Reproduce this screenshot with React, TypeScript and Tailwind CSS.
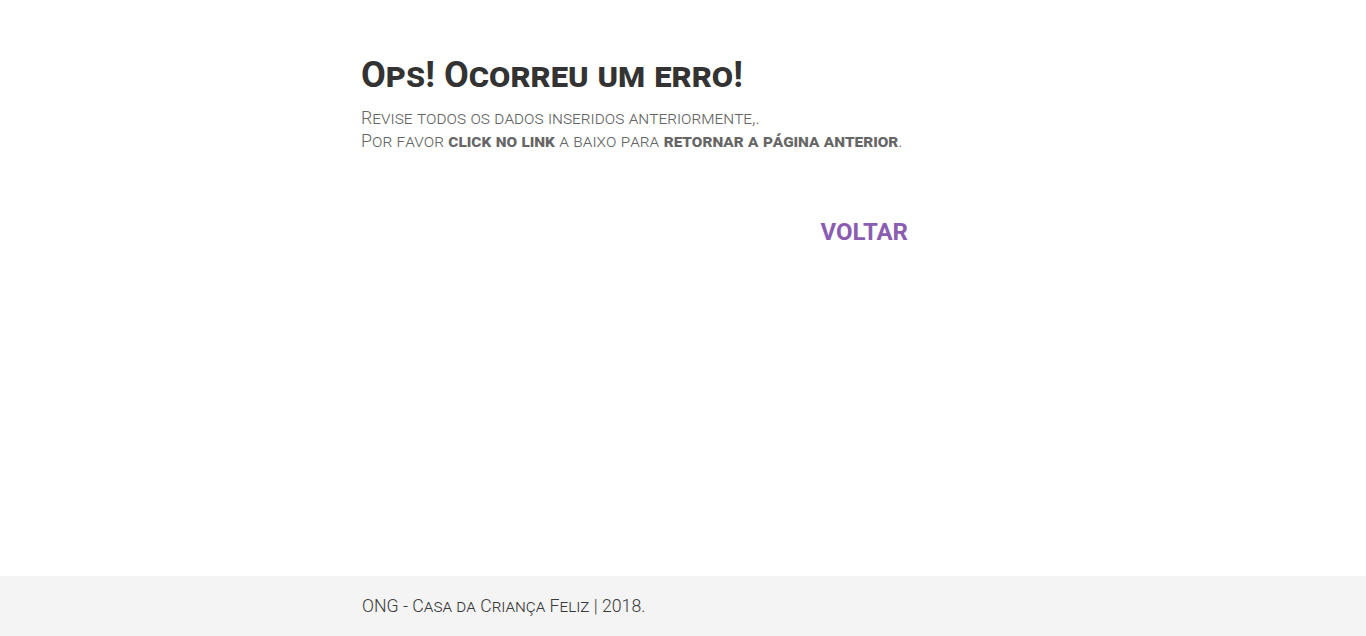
export default function App() {
  return (
    <div className="min-h-[636px] flex flex-col bg-white" style={{ fontFamily: "Roboto, 'Liberation Sans', sans-serif" }}>
      <main className="flex-1 pl-[361px] pt-[52px]">
        <div className="w-[547px]">
          <h1 className="text-[36px] leading-[46px] font-bold text-[#333333] [font-variant:small-caps]">
            Ops! Ocorreu um erro!
          </h1>
          <p className="mt-[8px] text-[17.85px] leading-[23px] text-[#666666] font-light [font-variant:small-caps] whitespace-nowrap">
            Revise todos os dados inseridos anteriormente,.
            <br />
            Por favor <b className="font-bold">click no link</b> a baixo para{" "}
            <b className="font-bold">retornar a página anterior</b>.
          </p>
          <div className="flex justify-end mt-[65px]">
            <a href="#" className="text-[24px] leading-[30px] font-bold text-[#8a5db3]">
              VOLTAR
            </a>
          </div>
        </div>
      </main>
      <footer className="h-[60px] bg-[#f4f4f4] flex items-center pl-[362px]">
        <span className="text-[17.7px] font-light text-[#3a3a3a] [font-variant:small-caps]">
          ONG - Casa da Criança Feliz | 2018.
        </span>
      </footer>
    </div>
  );
}
